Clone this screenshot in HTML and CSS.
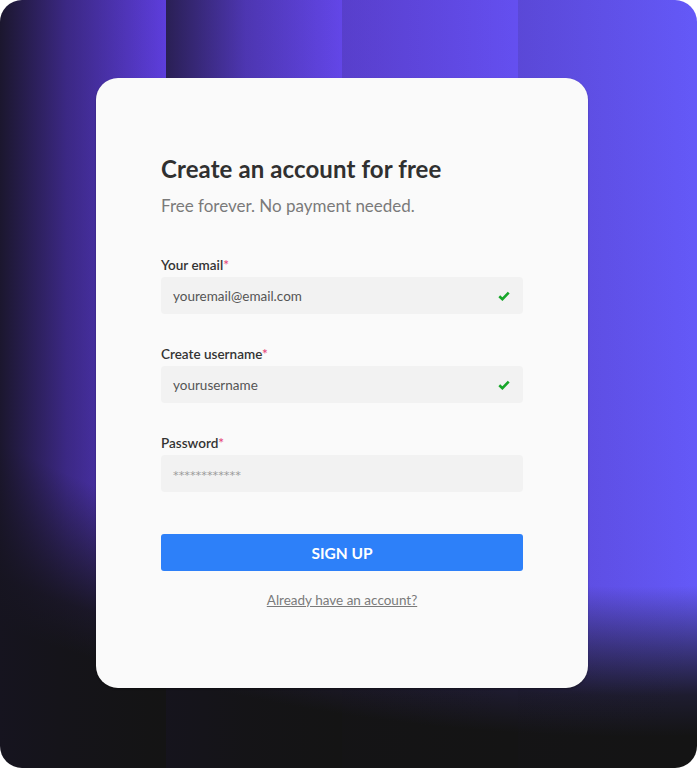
FILE: index.html
```html
<!DOCTYPE html>
<html lang="en">
<head>
<meta charset="utf-8">
<title>Create an account</title>
<link rel="stylesheet" href="styles.css">
</head>
<body>
<div class="frame">
  <main class="card">
    <h1 class="title">Create an account for free</h1>
    <p class="subtitle">Free forever. No payment needed.</p>
    <form class="form">
      <div class="field">
        <label class="label">Your email<span class="req">*</span></label>
        <div class="input">
          <span class="value">youremail@email.com</span>
          <svg class="check" width="12" height="10" viewBox="0 0 12 10"><path d="M1.3 5.2 L4.4 8.2 L10.7 1.6" fill="none" stroke="#17a62a" stroke-width="2.6" stroke-linejoin="miter"/></svg>
        </div>
      </div>
      <div class="field">
        <label class="label">Create username<span class="req">*</span></label>
        <div class="input">
          <span class="value">yourusername</span>
          <svg class="check" width="12" height="10" viewBox="0 0 12 10"><path d="M1.3 5.2 L4.4 8.2 L10.7 1.6" fill="none" stroke="#17a62a" stroke-width="2.6" stroke-linejoin="miter"/></svg>
        </div>
      </div>
      <div class="field">
        <label class="label">Password<span class="req">*</span></label>
        <div class="input">
          <span class="value pw">************</span>
        </div>
      </div>
      <button type="button" class="btn">SIGN UP</button>
      <a class="link" href="#">Already have an account?</a>
    </form>
  </main>
</div>
</body>
</html>
```
FILE: styles.css
```css
* { box-sizing: border-box; }
html, body { margin: 0; padding: 0; background: #ffffff; }
body { font-family: "Lato", "Noto Sans", sans-serif; }

.frame {
  width: 697px;
  height: 768px;
  border-radius: 22px;
  overflow: hidden;
  padding: 78px 0 0 96px;
  background:
    linear-gradient(to right, rgba(22,20,32,0.92) 0%, rgba(22,20,32,0.45) 40%, rgba(22,20,32,0) 100%) 0 0 / 166px 100% no-repeat,
    linear-gradient(to right, rgba(22,20,32,0.72) 0%, rgba(22,20,32,0.25) 45%, rgba(22,20,32,0) 100%) 166px 0 / 176px 100% no-repeat,
    linear-gradient(to right, rgba(22,20,32,0.14) 0%, rgba(22,20,32,0) 100%) 342px 0 / 176px 100% no-repeat,
    linear-gradient(to right, rgba(22,20,32,0.12) 0%, rgba(22,20,32,0) 100%) 518px 0 / 179px 100% no-repeat,
    radial-gradient(1130px 682px at 640px 0, rgba(20,20,20,0) 86%, rgba(20,20,20,0.5) 95%, rgba(20,20,20,0.88) 102%, #141414 108%),
    linear-gradient(to right, #5836d2 0%, #6448ea 55%, #6459f8 100%);
}

.card {
  width: 492px;
  height: 610px;
  background: #fafafa;
  border-radius: 22px;
  box-shadow: 0 1px 2px rgba(0,0,0,0.35);
  padding: 76px 65px 0 65px;
}

.title {
  margin: 0;
  font-size: 24px;
  font-weight: 700;
  color: #303030;
  line-height: 30px;
  letter-spacing: 0.1px;
}

.subtitle {
  margin: 11px 0 0;
  font-size: 17px;
  color: #7a7a7a;
  line-height: 22px;
}

.form {
  display: flex;
  flex-direction: column;
  margin-top: 39px;
}

.field {
  display: flex;
  flex-direction: column;
  gap: 3px;
  margin-bottom: 31px;
}

.label {
  font-size: 13.5px;
  font-weight: 600;
  color: #333333;
  line-height: 18px;
}

.req { color: #e64a7e; }

.input {
  height: 37px;
  background: #f2f2f2;
  border-radius: 4px;
  display: flex;
  align-items: center;
  justify-content: space-between;
  padding: 0 13px 0 12px;
}

.value {
  font-size: 13.5px;
  color: #555555;
}

.value.pw {
  font-family: "DejaVu Sans", sans-serif;
  font-size: 11.3px;
  color: #9a9a9a;
  padding-top: 4px;
}

.check { display: block; }

.btn {
  margin-top: 11px;
  height: 37px;
  border: none;
  border-radius: 3px;
  background: #2d80f9;
  color: #ffffff;
  font-family: inherit;
  font-size: 15.5px;
  font-weight: 700;
  letter-spacing: 0;
}

.link {
  margin-top: 21px;
  align-self: center;
  font-size: 13.5px;
  line-height: 17px;
  color: #7a7a7a;
  text-decoration: underline;
}
```
